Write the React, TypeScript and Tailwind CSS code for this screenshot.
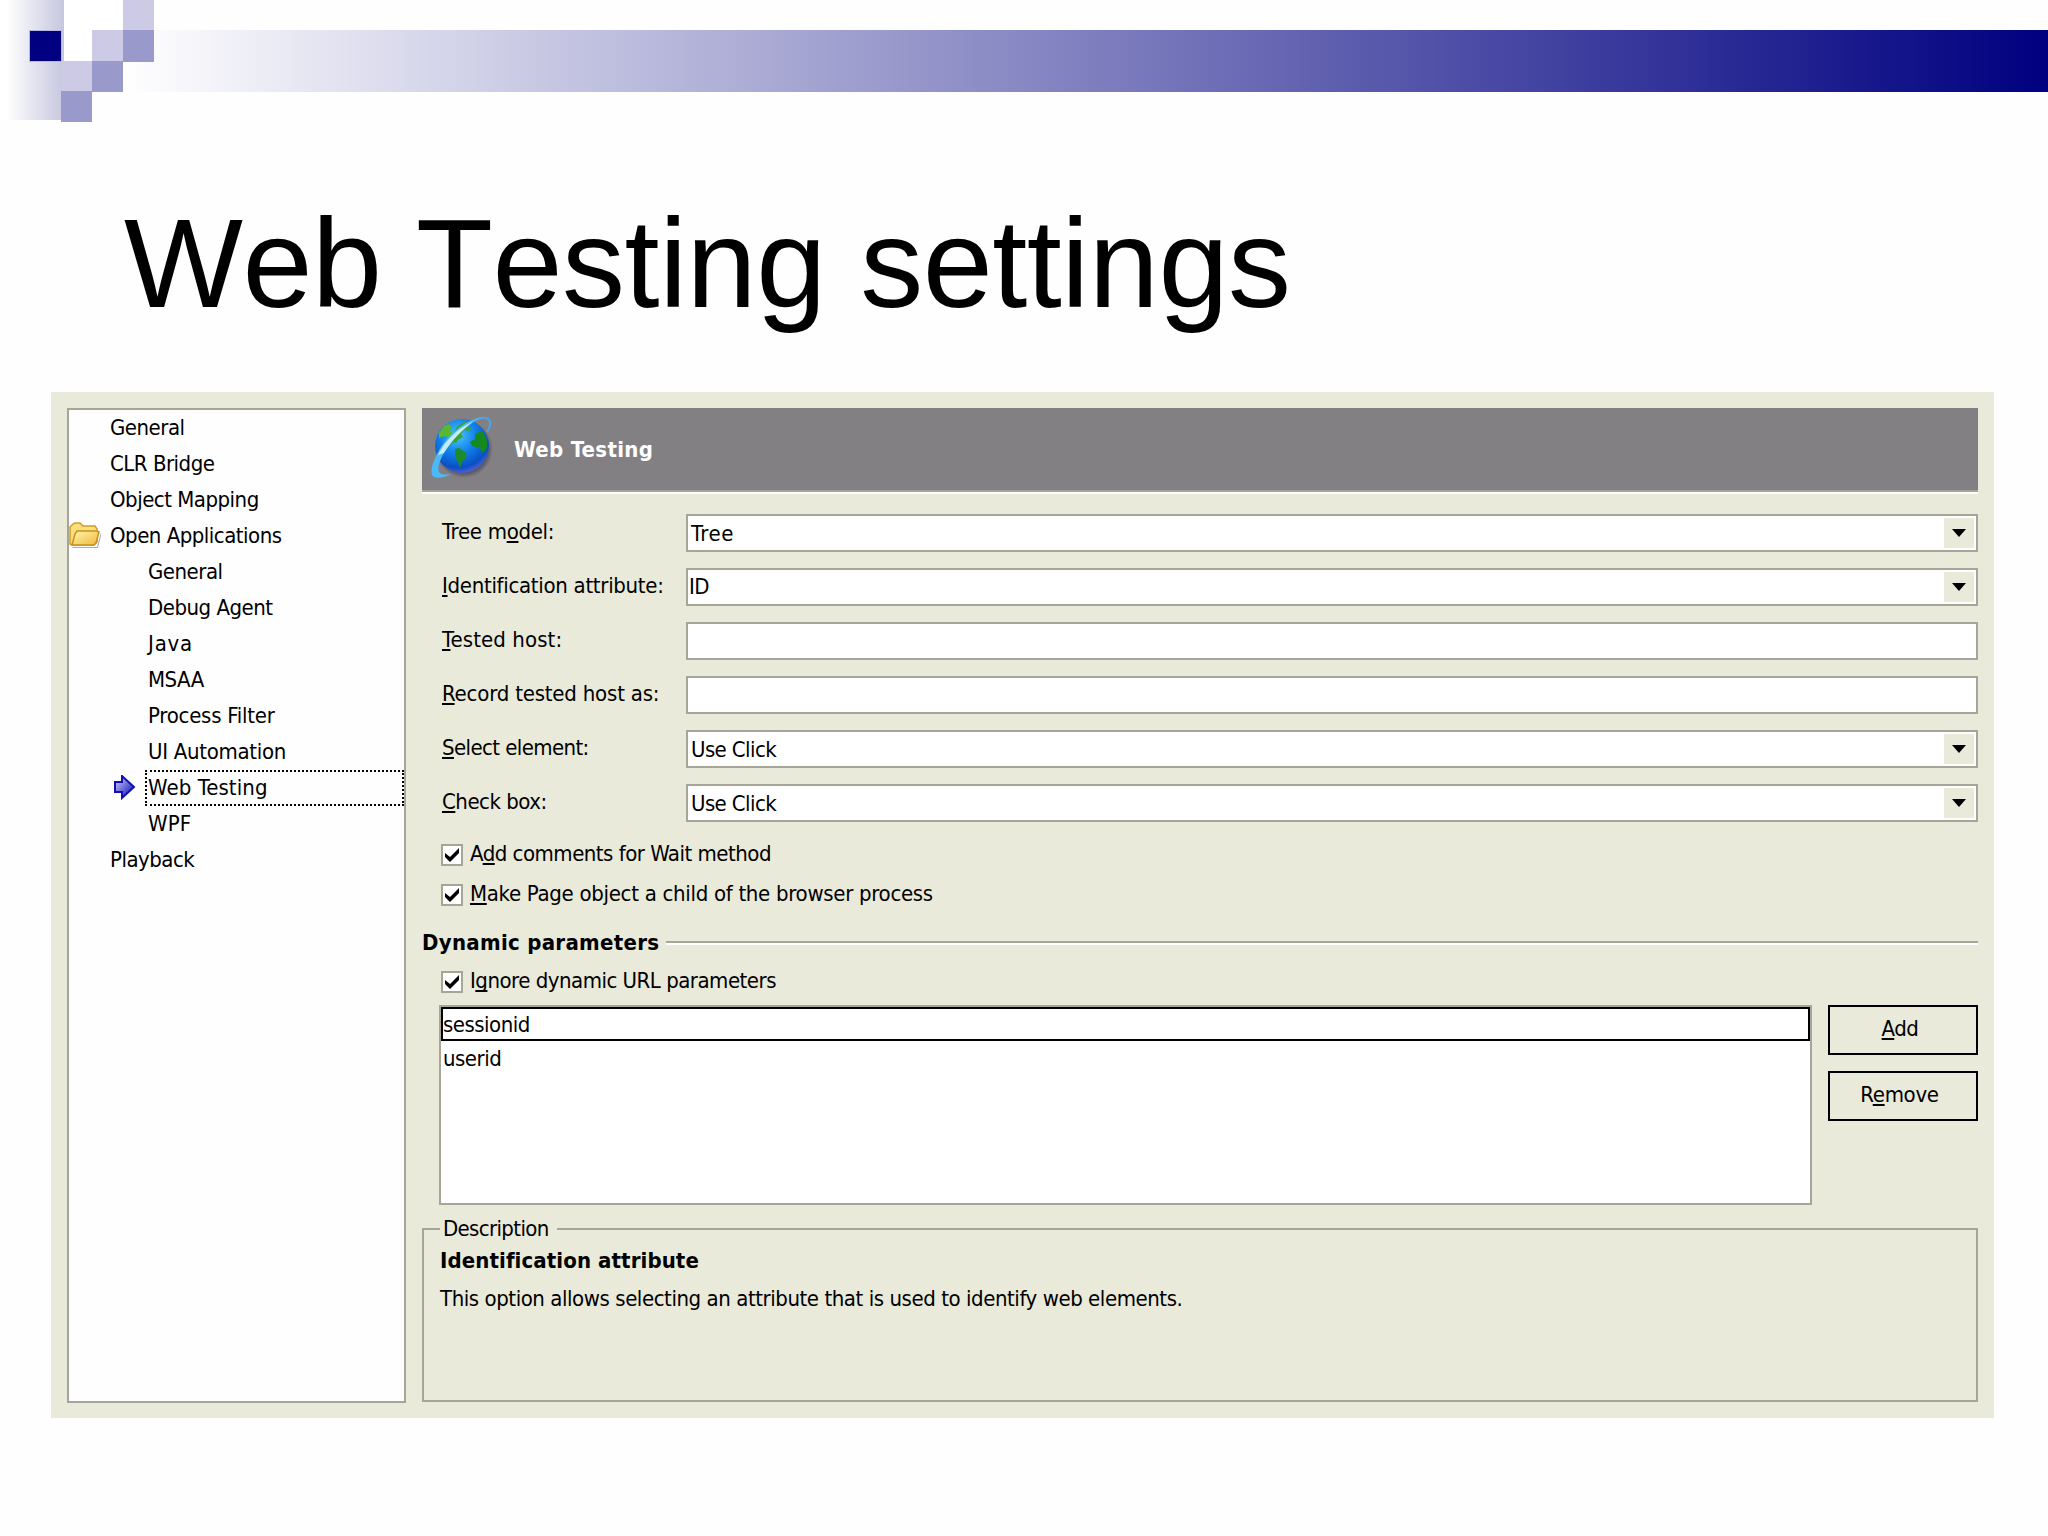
import React from 'react';

type TreeItem = { label: string; level: number; icon?: 'folder' | 'arrow'; textClass?: string };
type Field = {
  id: string;
  label: React.ReactNode;
  labelClass?: string;
  value?: string;
  valueClass?: string;
  combo?: boolean;
};

const treeItems: TreeItem[] = [
  { label: 'General', level: 0 },
  { label: 'CLR Bridge', level: 0 },
  { label: 'Object Mapping', level: 0 },
  { label: 'Open Applications', level: 0, icon: 'folder' },
  { label: 'General', level: 1 },
  { label: 'Debug Agent', level: 1 },
  { label: 'Java', level: 1, textClass: 'tracking-[0.8px]' },
  { label: 'MSAA', level: 1 },
  { label: 'Process Filter', level: 1, textClass: 'tracking-[-0.25px]' },
  { label: 'UI Automation', level: 1, textClass: 'tracking-[-0.3px]' },
  { label: 'Web Testing', level: 1, icon: 'arrow', textClass: 'tracking-[0.1px]' },
  { label: 'WPF', level: 1, textClass: 'tracking-[0.1px]' },
  { label: 'Playback', level: 0 },
];

// Accelerator key
const Key = ({ children }: { children: string }) => (
  <span className="underline decoration-2 underline-offset-[2px] [text-decoration-skip-ink:none]">{children}</span>
);

const fields: Field[] = [
  {
    id: 'tree',
    label: <>Tree m<Key>o</Key>del:</>,
    labelClass: 'tracking-[-0.3px]',
    value: 'Tree',
    valueClass: 'pl-[3px] pt-0.5 tracking-[0.5px]',
    combo: true,
  },
  {
    id: 'attr',
    label: <><Key>I</Key>dentification attribute:</>,
    labelClass: 'tracking-[-0.3px]',
    value: 'ID',
    valueClass: 'pl-px',
    combo: true,
  },
  { id: 'host', label: <><Key>T</Key>ested host:</>, labelClass: 'tracking-[0.1px]' },
  { id: 'record', label: <><Key>R</Key>ecord tested host as:</>, labelClass: 'tracking-[-0.2px]' },
  {
    id: 'select',
    label: <><Key>S</Key>elect element:</>,
    labelClass: 'tracking-[-0.6px]',
    value: 'Use Click',
    valueClass: 'pl-[3px] pt-0.5 tracking-[-0.6px]',
    combo: true,
  },
  {
    id: 'check',
    label: <><Key>C</Key>heck box:</>,
    value: 'Use Click',
    valueClass: 'pl-[3px] pt-0.5 tracking-[-0.6px]',
    combo: true,
  },
];

function FolderIcon() {
  return (
    <svg width="32" height="28" viewBox="0 0 32 28">
      <defs>
        <linearGradient id="folder" x1="0" y1="0" x2="1" y2="1">
          <stop offset="0" stopColor="#fff6b0" />
          <stop offset="1" stopColor="#f0b93a" />
        </linearGradient>
      </defs>
      <path d="M3 25h25l4-15v4l-3 12H4z" fill="#8d8d8d" opacity=".7" />
      <path d="M1 22V5l3-3 2-1h5l3 3h12l2 3v13l-3 3H3z" fill="#f9e07c" stroke="#cf9c28" strokeWidth="1.5" />
      <path d="M3 23l3-11 2-3h20l2 1-3 11-2 2H4z" fill="url(#folder)" stroke="#c8921a" strokeWidth="1.5" />
    </svg>
  );
}

function ArrowIcon() {
  return (
    <svg width="22" height="26" viewBox="0 0 22 26">
      <defs>
        <linearGradient id="arrow" x1="0" y1="0" x2="1" y2="1">
          <stop offset=".1" stopColor="#c4c4fc" />
          <stop offset=".8" stopColor="#2a2ac0" />
        </linearGradient>
      </defs>
      <path d="M1 7h7V1l12 11L8 23v-6H1z" fill="url(#arrow)" stroke="#1010b4" strokeWidth="2" />
    </svg>
  );
}

function GlobeIcon() {
  return (
    <svg width="64" height="66" viewBox="0 0 64 66">
      <defs>
        <radialGradient id="ocean" cx=".42" cy=".3" r=".75">
          <stop offset="0" stopColor="#4cc4ff" />
          <stop offset=".45" stopColor="#1080e8" />
          <stop offset=".8" stopColor="#0a4fc4" />
          <stop offset="1" stopColor="#6a66d0" />
        </radialGradient>
        <radialGradient id="globeShadow">
          <stop offset=".8" stopColor="#3c3c4c" stopOpacity=".7" />
          <stop offset="1" stopColor="#3c3c4c" stopOpacity="0" />
        </radialGradient>
      </defs>
      <circle cx="34" cy="34" r="29" fill="url(#globeShadow)" />
      <circle cx="32" cy="31" r="27" fill="url(#ocean)" />
      <path d="M9 18l5-7 5-2 3 4-2 3 3 2-5 4-3-1-6 2z" fill="#5ab82c" />
      <path d="M17 26l5-6 5-8 7-5 5 1-2 3 4 2-2 3-5-1-3 4 2 3-5 3-2 3-3-1-3 3z" fill="#3aa52c" />
      <path d="M25 34l4-1 6 4 2 2-2 5-3 3-2 6-2-6-3-5z" fill="#1e8c2c" />
      <path d="M45 19l6-3 3 2 3 7v8l-4 5-4-5-7-2-2-4 5-3z" fill="#168a20" />
      <path d="M46 5c6-3 12-3 14 1 1 4-1 8-3 11" fill="none" stroke="#4aa6e8" strokeWidth="2" />
      <path
        d="M52 2C34 6 16 20 6 41 1 51 0 60 4 62c5 2 12 0 17-3-5 1-10 1-12-2-2-4 1-12 6-21C23 22 36 10 52 2z"
        fill="#4cb8f8"
      />
      <path d="M8 40C14 27 26 14 44 6 32 15 22 25 14 38z" fill="#d8f4fc" opacity=".85" />
    </svg>
  );
}

function SlideBanner() {
  return (
    <div className="relative h-[124px] w-full overflow-hidden">
      <div className="absolute left-0 top-0 h-[120px] w-16 bg-linear-to-r/srgb from-white from-10% to-[#c6c6df]" />
      <div className="absolute left-[122px] right-0 top-[30px] h-[62px] bg-linear-to-r/srgb from-white to-[#000080]" />
      <div className="absolute left-16 top-0 h-[61px] w-[60px] bg-white" />
      <div className="absolute left-[29px] top-[30px] h-8 w-[33px] border border-[#b9b9e6] bg-[#000080]" />
      <div className="absolute left-[123px] top-0 h-[30px] w-[31px] bg-[#cdcae6]" />
      <div className="absolute left-[92px] top-[30px] h-[31px] w-[31px] bg-[#cdcae6]" />
      <div className="absolute left-[123px] top-[30px] h-8 w-[31px] bg-[#9a99cc]" />
      <div className="absolute left-[62px] top-[61px] h-[30px] w-[30px] bg-[#cdcae6]" />
      <div className="absolute left-[92px] top-[61px] h-[31px] w-[31px] bg-[#9a99cc]" />
      <div className="absolute left-[61px] top-[91px] h-[31px] w-[31px] bg-[#9a99cc]" />
    </div>
  );
}

function Sidebar() {
  return (
    <nav className="h-[995px] w-[339px] shrink-0 border-2 border-[#a6a698] bg-[#fefefe]">
      {treeItems.map((item, i) => (
        <div key={i} className={item.level === 0 ? 'flex h-9' : 'flex h-9 pl-[38px]'}>
          <span className="flex w-[38px] shrink-0 items-center">
            {item.icon === 'folder' && <FolderIcon />}
            {item.icon === 'arrow' && <span className="pl-[7px]"><ArrowIcon /></span>}
          </span>
          <span
            className={
              item.icon === 'arrow'
                ? 'flex-1 border-2 border-dotted border-black pl-px leading-8'
                : 'flex-1 pl-[3px] leading-9'
            }
          >
            <span className={item.textClass}>{item.label}</span>
          </span>
        </div>
      ))}
    </nav>
  );
}

function CheckRow({ children, textClass }: { children: React.ReactNode; textClass?: string }) {
  return (
    <label className="flex h-[22px] gap-[7px] leading-5">
      <span className="flex size-[22px] items-center justify-center border-2 border-[#a6a698] bg-white">
        <svg width="16" height="16" viewBox="0 0 16 16">
          <path d="M1 6l5 4 9-9v5l-9 9-5-5z" fill="#000" />
        </svg>
      </span>
      <span className={textClass}>{children}</span>
    </label>
  );
}

function FieldRow({ field }: { field: Field }) {
  return (
    <div className="flex h-[38px]">
      <span className="w-[244px] shrink-0 leading-9">
        <span className={field.labelClass}>{field.label}</span>
      </span>
      <div className="flex h-[38px] flex-1 items-center border-2 border-[#a6a698] bg-white pr-0.5">
        <span className="flex-1 leading-[34px]">
          <span className={field.valueClass ? 'block ' + field.valueClass : 'block'}>{field.value}</span>
        </span>
        {field.combo && (
          <span className="flex size-[30px] items-center justify-center bg-[#e9eada]">
            <svg width="14" height="8" viewBox="0 0 14 8">
              <path d="M0 0h14L7 8z" />
            </svg>
          </span>
        )}
      </div>
    </div>
  );
}

function DynamicParameters() {
  return (
    <section>
      <div className="flex h-6 items-center">
        <h3 className="w-[244px] font-bold leading-6 tracking-[0.3px]">Dynamic parameters</h3>
        <div className="h-1 flex-1 border-b-2 border-t-2 border-b-white border-t-[#a6a698]" />
      </div>
      <div className="pl-[19px] pt-4">
        <CheckRow textClass="tracking-[-0.5px]">I<Key>g</Key>nore dynamic URL parameters</CheckRow>
      </div>
      <div className="flex gap-4 pl-[17px] pt-3">
        <ul className="h-[200px] flex-1 border-2 border-[#a6a698] bg-white">
          <li className="h-[34px] border-2 border-black leading-[32px]">sessionid</li>
          <li className="h-[34px] pl-0.5 leading-9">userid</li>
        </ul>
        <div className="flex w-[150px] flex-col gap-4">
          <button className="h-[50px] border-2 border-black pb-1 pr-1.5"><Key>A</Key>dd</button>
          <button className="h-[50px] border-2 border-black pb-1 pr-[7px] tracking-[-0.3px]">R<Key>e</Key>move</button>
        </div>
      </div>
    </section>
  );
}

export default function App() {
  return (
    <div className="h-[1536px] w-[2048px] overflow-hidden bg-[#fefefe] text-black">
      <SlideBanner />
      <h1 className="h-[268px] pl-[124px] pt-[66px] font-['Liberation_Sans',Arial,sans-serif] text-[126px] leading-[147px] tracking-[-0.5px] [font-kerning:none]">
        Web Testing settings
      </h1>
      <div className="ml-[51px] flex h-[1026px] w-[1943px] gap-4 bg-[#e9eada] p-4 font-['DejaVu_Sans_Condensed','DejaVu_Sans',Tahoma,sans-serif] text-[22px] tracking-[-0.5px]">
        <Sidebar />
        <main className="flex w-[1556px] flex-col">
          <header className="flex h-[86px] items-start border-b-2 border-white bg-[#838083] shadow-[inset_0_-2px_0_#a6a698]">
            <span className="pl-2 pt-[7px]"><GlobeIcon /></span>
            <h2 className="pl-5 font-bold leading-[84px] tracking-[0.3px] text-white">Web Testing</h2>
          </header>
          <div className="flex flex-col gap-4 pl-5 pt-5">
            {fields.map((field) => (
              <FieldRow key={field.id} field={field} />
            ))}
          </div>
          <div className="flex flex-col gap-[18px] pb-[25px] pl-[19px] pt-[22px]">
            <CheckRow textClass="tracking-[-0.5px]">A<Key>d</Key>d comments for Wait method</CheckRow>
            <CheckRow textClass="tracking-[-0.3px]">
              <Key>M</Key>ake Page object a child of the browser process
            </CheckRow>
          </div>
          <DynamicParameters />
          <fieldset className="mt-3 h-[188px] border-2 border-[#a6a698] pl-4">
            <legend className="pl-[3px] pr-2 leading-6 tracking-[-0.65px]">Description</legend>
            <h4 className="pt-1.5 font-bold leading-7 tracking-[0.1px]">Identification attribute</h4>
            <p className="pt-2 leading-8 tracking-[-0.44px]">
              This option allows selecting an attribute that is used to identify web elements.
            </p>
          </fieldset>
        </main>
      </div>
    </div>
  );
}
